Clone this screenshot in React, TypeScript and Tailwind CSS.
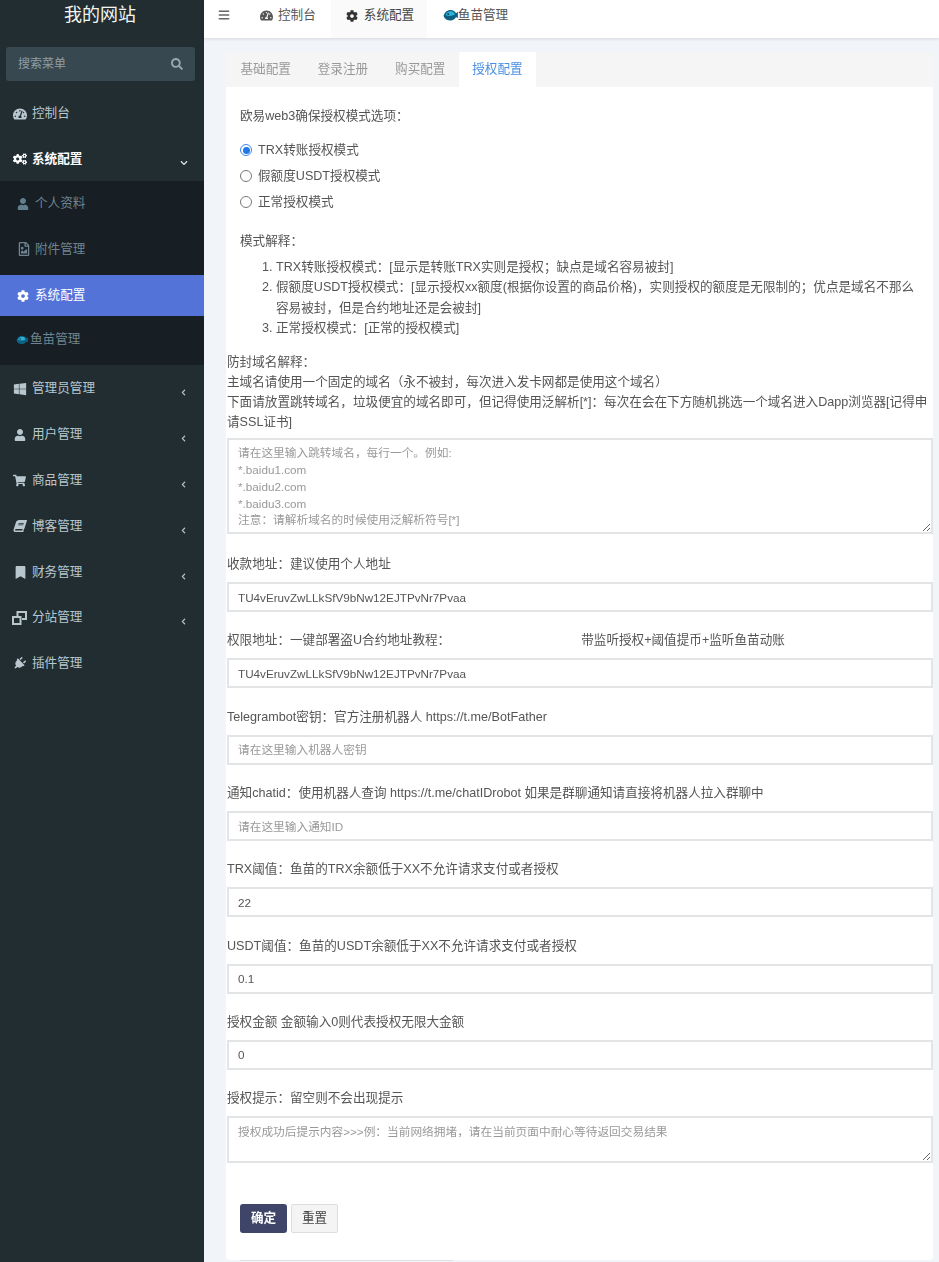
import {
  FaBars,
  FaBook,
  FaBookmark,
  FaChevronDown,
  FaChevronLeft,
  FaCog,
  FaCogs,
  FaPlug,
  FaRegFileImage,
  FaSearch,
  FaShoppingCart,
  FaTachometerAlt,
  FaUser,
  FaWindows,
} from "react-icons/fa";
import type { ReactNode } from "react";

const FishIcon = ({ size = 14 }: { size?: number }) => (
  <svg width={size} height={size * 0.8} viewBox="0 0 16 13" className="shrink-0">
    <path d="M.500 7.500C1.500 3.500 4.500 1 8 1c3 0 5 1.500 6 3.500L16 3v7l-2-1.200C12.800 11 10.800 12.500 8 12.500c-3.500 0-6.500-1.500-7.500-5z" fill="#0f5f80" />
    <path d="M2.500 6.500C3.500 4 5.500 2.500 8 2.500c2.400 0 4 1.300 4.800 3.500-2.800 1.700-7 2-10.300.500z" fill="#2bb3d8" />
    <circle cx="5.500" cy="5.500" r="1" fill="#0c2f3f" />
  </svg>
);

// the two overlapping windows next to 分站管理
const CloneIcon = () => (
  <svg width="15" height="14" viewBox="0 0 15 14" fill="none" stroke="currentColor" strokeWidth="2" className="-ml-[1px]">
    <rect x="1" y="6" width="7.500" height="7" />
    <path d="M5.500 5V1H14v7h-4" />
  </svg>
);

type MenuItem = { label: string; icon: ReactNode };

const lowerMenu: (MenuItem & { arrow?: boolean })[] = [
  { label: "管理员管理", icon: <FaWindows size={14} />, arrow: true },
  { label: "用户管理", icon: <FaUser size={12} className="ml-[1px]" />, arrow: true },
  { label: "商品管理", icon: <FaShoppingCart size={13} />, arrow: true },
  { label: "博客管理", icon: <FaBook size={12} className="ml-[1px] -skew-x-[18deg]" />, arrow: true },
  { label: "财务管理", icon: <FaBookmark size={13} className="ml-[1px]" />, arrow: true },
  { label: "分站管理", icon: <CloneIcon />, arrow: true },
  { label: "插件管理", icon: <FaPlug size={13} className="rotate-45" /> },
];

function Sidebar() {
  return (
    <aside className="w-[204px] shrink-0 bg-[#222d32] text-[12.600px] text-[#b8c7ce]">
      <div className="h-[30px] pr-[4px] text-center text-[18px] leading-[30px] text-[#f2f5f0]">我的网站</div>

      <div className="mx-[6px] mt-[17px] mb-[10px] flex h-[34px] w-[189px] items-center justify-between rounded-[3px] bg-[#374850] pr-[12px] pl-[12px] text-[12px] text-[#8f9ea5]">
        <span>搜索菜单</span>
        <FaSearch size={12} className="text-[#98a6ad]" />
      </div>

      <div className="flex h-[45px] items-center pr-[20px] pl-[13px]">
        <span className="flex w-[19px] text-[#b8c7ce]">
          <FaTachometerAlt size={14} />
        </span>
        控制台
      </div>

      <div className="flex h-[45px] items-center justify-between pt-[1px] pr-[16px] pl-[13px] font-bold text-white">
        <span className="flex items-center">
          <span className="flex w-[19px]">
            <FaCogs size={14} />
          </span>
          系统配置
        </span>
        <FaChevronDown size={8} className="mt-[7px] text-[#dfe6e9]" />
      </div>

      <div className="h-[184px] bg-[#171e24] text-[#6f8490]">
        <div className="flex h-[44px] items-center pt-[1px] pl-[17px]">
          <span className="flex w-[18px] text-[#60808f]">
            <FaUser size={12} />
          </span>
          个人资料
        </div>
        <div className="flex h-[50px] items-center pb-[2px] pl-[17px]">
          <span className="flex w-[18px] text-[#6f8490]">
            <FaRegFileImage size={14} />
          </span>
          附件管理
        </div>
        <div className="flex h-[41px] items-center bg-[#5373d9] pl-[17px] text-white">
          <span className="flex w-[18px]">
            <FaCog size={12} />
          </span>
          系统配置
        </div>
        <div className="flex h-[49px] items-center gap-[2px] pb-[2px] pl-[16px]">
          <FishIcon size={12} />
          鱼苗管理
        </div>
      </div>

      {lowerMenu.map((item) => (
        <div key={item.label} className="flex h-[45.800px] items-center justify-between pt-[2px] pr-[17px] pl-[13px]">
          <span className="flex items-center">
            <span className="flex w-[19px]">{item.icon}</span>
            {item.label}
          </span>
          {item.arrow && <FaChevronLeft size={7} className="mt-[8px]" />}
        </div>
      ))}
    </aside>
  );
}

function TopBar() {
  return (
    <header className="relative flex h-[38px] items-center bg-white text-[12.600px] text-[#555] shadow-[0_1px_3px_rgba(0,0,0,0.12)]">
      <FaBars size={12} className="mr-[30px] mb-[8px] ml-[14px] text-[#666]" />
      <div className="flex h-full items-center pb-[8px]">
        <span className="flex w-[18px] pt-[1px]">
          <FaTachometerAlt size={13} />
        </span>
        控制台
      </div>
      <div className="ml-[15px] flex h-full w-[96px] items-center bg-[#fafafa] pb-[8px] pl-[15px] text-[#444]">
        <span className="flex w-[18px] pt-[1px]">
          <FaCog size={12} className="text-[#333]" />
        </span>
        系统配置
      </div>
      <div className="ml-[16px] flex h-full items-center pb-[8px]">
        <FishIcon size={15} />
        鱼苗管理
      </div>
    </header>
  );
}

function Radio({ checked, label }: { checked?: boolean; label: string }) {
  return (
    <label className="flex h-[26px] items-center text-[12.600px] text-[#555]">
      <span
        className={`mr-[6px] flex h-[12px] w-[12px] items-center justify-center rounded-full border ${
          checked ? "border-[#3a87e6]" : "border-[#777]"
        }`}
      >
        {checked && <span className="h-[7px] w-[7px] rounded-full bg-[#1f78e6]" />}
      </span>
      {label}
    </label>
  );
}

function Field({
  label,
  value,
  placeholder,
  children,
}: {
  label: ReactNode;
  value?: string;
  placeholder?: string;
  children?: ReactNode;
}) {
  return (
    <div className="h-[76.300px]">
      <div className="h-[21px] pt-[2px] leading-[20px]">{label}</div>
      <div className="mt-[9px]">
        {children ?? (
          <input
            readOnly
            value={value ?? ""}
            placeholder={placeholder}
            className="block h-[30px] w-full border-2 border-[#e3e4e6] bg-white px-[9px] text-[11.700px] text-[#555] outline-none placeholder:text-[#999]"
          />
        )}
      </div>
    </div>
  );
}

const domainPlaceholder = `请在这里输入跳转域名，每行一个。例如:
*.baidu1.com
*.baidu2.com
*.baidu3.com
注意：请解析域名的时候使用泛解析符号[*]`;

function ConfigForm() {
  return (
    <div className="h-[1173px] rounded-b-[4px] bg-white text-[12.600px] leading-[20px] text-[#555]">
      <div className="pt-[18px] pl-[14px]">
        <p className="h-[20px] pt-[1px]">欧易web3确保授权模式选项：</p>
        <div className="mt-[12px]">
          <Radio checked label="TRX转账授权模式" />
          <Radio label="假额度USDT授权模式" />
          <Radio label="正常授权模式" />
        </div>
        <p className="mt-[16px] h-[20px]">模式解释：</p>
        <ol className="mt-[6px] list-decimal pr-[14px] pl-[36px] leading-[20.300px]">
          <li>TRX转账授权模式：[显示是转账TRX实则是授权；缺点是域名容易被封]</li>
          <li>假额度USDT授权模式：[显示授权xx额度(根据你设置的商品价格)，实则授权的额度是无限制的；优点是域名不那么容易被封，但是合约地址还是会被封]</li>
          <li>正常授权模式：[正常的授权模式]</li>
        </ol>
      </div>

      <div className="mt-[14px] pl-[1px]">
        <p>
          防封域名解释：
          <br />
          主域名请使用一个固定的域名（永不被封，每次进入发卡网都是使用这个域名）
          <br />
          下面请放置跳转域名，垃圾便宜的域名即可，但记得使用泛解析[*]：每次在会在下方随机挑选一个域名进入Dapp浏览器[记得申请SSL证书]
        </p>
        <textarea
          readOnly
          placeholder={domainPlaceholder}
          className="mt-[6px] block h-[96px] w-full border-2 border-[#e3e4e6] bg-white px-[9px] py-[5px] text-[11.700px] leading-[16.800px] outline-none placeholder:text-[#999]"
        />

        <div className="mt-[18px]">
          <Field label="收款地址：建议使用个人地址" value="TU4vEruvZwLLkSfV9bNw12EJTPvNr7Pvaa" />
          <Field
            label={
              <>
                权限地址：一键部署盗U合约地址教程：<span className="inline-block w-[131px]" />带监听授权+阈值提币+监听鱼苗动账
              </>
            }
            value="TU4vEruvZwLLkSfV9bNw12EJTPvNr7Pvaa"
          />
          <Field label="Telegrambot密钥：官方注册机器人 https://t.me/BotFather" placeholder="请在这里输入机器人密钥" />
          <Field label="通知chatid：使用机器人查询 https://t.me/chatIDrobot 如果是群聊通知请直接将机器人拉入群聊中" placeholder="请在这里输入通知ID" />
          <Field label="TRX阈值：鱼苗的TRX余额低于XX不允许请求支付或者授权" value="22" />
          <Field label="USDT阈值：鱼苗的USDT余额低于XX不允许请求支付或者授权" value="0.1" />
          <Field label="授权金额 金额输入0则代表授权无限大金额" value="0" />
          <Field label="授权提示：留空则不会出现提示">
            <textarea
              readOnly
              placeholder="授权成功后提示内容>>>例：当前网络拥堵，请在当前页面中耐心等待返回交易结果"
              className="block h-[47px] w-full border-2 border-[#e3e4e6] bg-white px-[9px] py-[5px] text-[11.700px] leading-[17px] outline-none placeholder:text-[#999]"
            />
          </Field>
        </div>

        <div className="mt-[41px] flex gap-[4px] pl-[13px] text-[12.600px]">
          <button className="h-[29px] w-[47px] rounded-[3px] bg-[#3e4568] font-bold text-white">确定</button>
          <button className="h-[29px] w-[47px] rounded-[2px] border border-[#ddd] bg-[#f4f4f4] text-[#444]">重置</button>
        </div>
      </div>
    </div>
  );
}

export default function App() {
  const tabs = ["基础配置", "登录注册", "购买配置"];

  return (
    <div
      className="flex h-[1262px] overflow-hidden bg-[#f1f4f8]"
      style={{ fontFamily: '"Liberation Sans", "Noto Sans CJK SC", sans-serif' }}
    >
      <Sidebar />
      <main className="min-w-0 flex-1">
        <TopBar />
        <div className="pt-[14px] pr-[6px] pl-[22px]">
          <div className="flex h-[35px] bg-[#f5f5f5] pl-[1px] text-[12.600px] text-[#999]">
            {tabs.map((tab) => (
              <div key={tab} className="flex w-[77.300px] items-center justify-center">
                {tab}
              </div>
            ))}
            <div className="flex w-[77px] items-center justify-center rounded-t-[2px] bg-white text-[#4a90e2]">授权配置</div>
          </div>
          <ConfigForm />
          <div className="ml-[14px] h-[1px] w-[213px] bg-[#e0e0e0]" />
        </div>
      </main>
    </div>
  );
}
